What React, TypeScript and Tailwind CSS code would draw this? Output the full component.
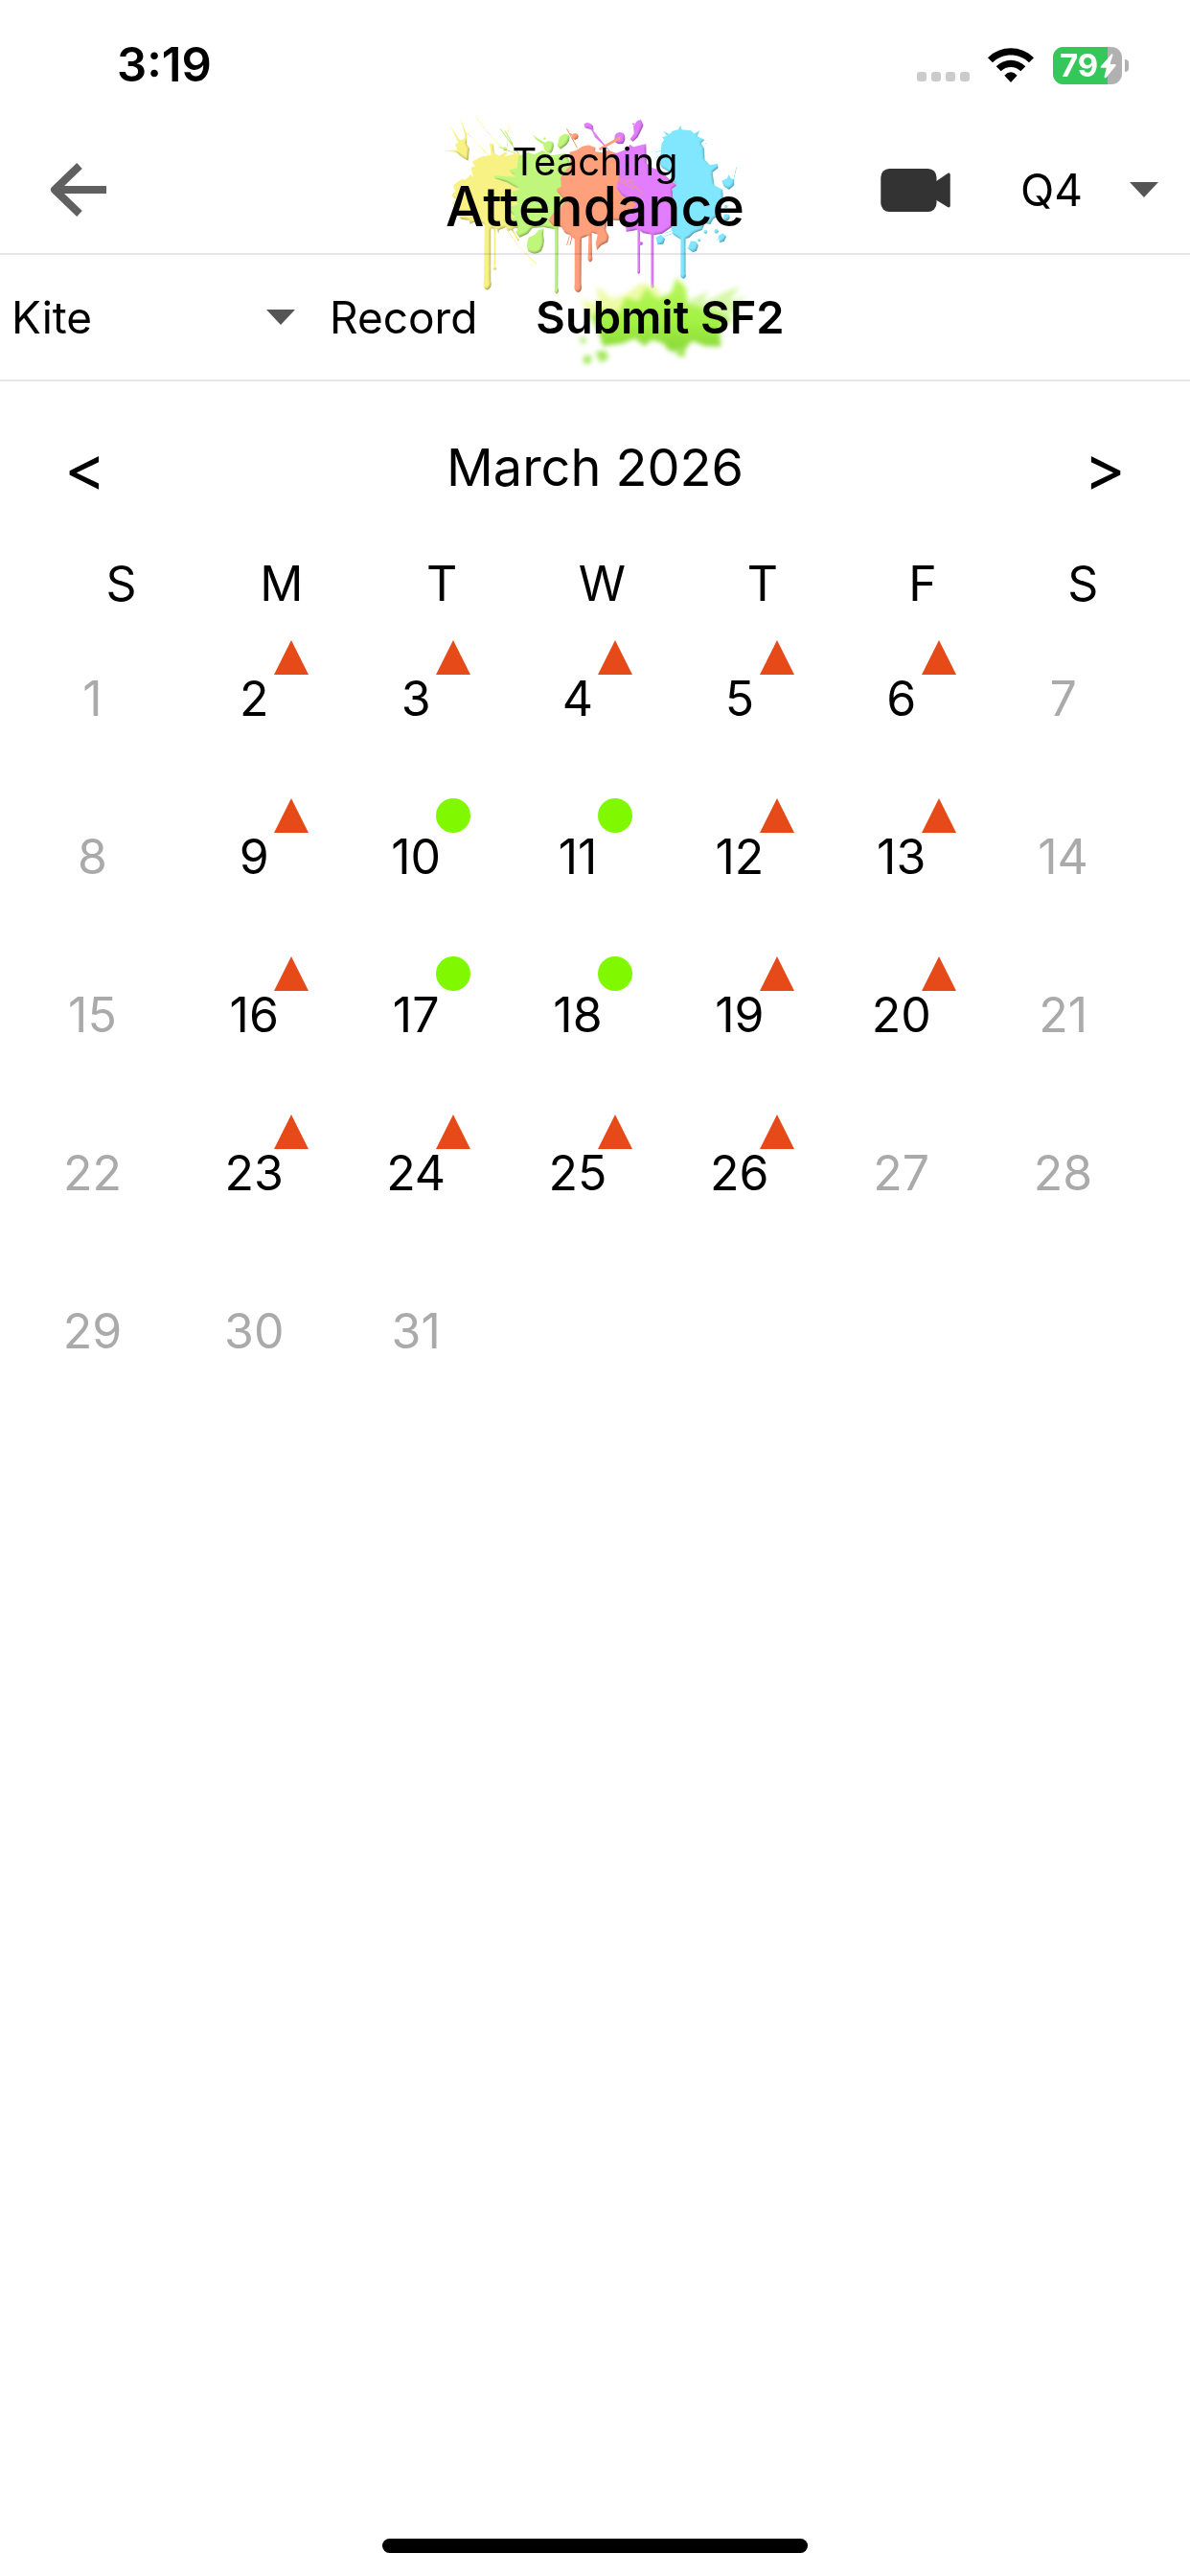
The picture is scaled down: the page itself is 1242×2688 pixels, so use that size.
import { useState } from "react";

type Mark = "absent" | "present";

const WEEKDAYS = ["S", "M", "T", "W", "T", "F", "S"];

const MARKS: Record<number, Mark> = {
  2: "absent", 3: "absent", 4: "absent", 5: "absent", 6: "absent",
  9: "absent", 10: "present", 11: "present", 12: "absent", 13: "absent",
  16: "absent", 17: "present", 18: "present", 19: "absent", 20: "absent",
  23: "absent", 24: "absent", 25: "absent", 26: "absent",
};

const DAYS = Array.from({ length: 31 }, (_, i) => i + 1);

function Caret() {
  return (
    <svg viewBox="0 0 30 16" className="pointer-events-none h-4 w-[30px] shrink-0" aria-hidden="true">
      <path d="M0 0h30L15 16z" fill="#555" />
    </svg>
  );
}

function StatusBar() {
  return (
    <div className="flex h-[132px] items-center justify-between pt-1 pr-16 pl-[122px]">
      <span className="text-[49px] leading-[56px] font-semibold">3:19</span>
      <div className="flex items-center">
        <div className="mt-6 flex gap-[5px]">
          <span className="size-[10px] rounded-[3px] bg-[#cbcbcb]" />
          <span className="size-[10px] rounded-[3px] bg-[#cbcbcb]" />
          <span className="size-[10px] rounded-[3px] bg-[#cbcbcb]" />
          <span className="size-[10px] rounded-[3px] bg-[#cbcbcb]" />
        </div>
        <svg viewBox="0 0 144 108" className="ml-[19px] h-9 w-12" aria-hidden="true">
          <path d="M0 31C40-9 104-9 144 31L129 46C97 15 47 15 15 46Z" />
          <path d="M26 58C52 32 92 32 118 58L103 73C86 56 58 56 41 73Z" />
          <path d="M52 86Q72 66 92 86L72 108Z" />
        </svg>
        <div className="ml-5 flex items-center gap-[3px]">
          <div className="relative flex h-[39px] w-[72px] items-center overflow-hidden rounded-[11px] bg-[#b1b1b1]">
            <div className="absolute inset-y-0 left-0 w-[57px] bg-[#34c759]" />
            <span className="relative pl-[7px] text-[33px] leading-[39px] font-bold text-white">79</span>
            <svg viewBox="0 0 50 78" className="absolute top-[7px] right-[6px] h-[26px] w-[17px]" aria-hidden="true">
              <path d="M36 1 2 40Q0 44 4 44H20L13 72Q14 79 19 75L49 38Q51 33 46 33H31L40 4Q40-1 36 1Z" fill="#fff" />
            </svg>
          </div>
          <span className="h-[13px] w-1 rounded-r-full bg-[#b1b1b1]" />
        </div>
      </div>
    </div>
  );
}

function PaintSplash() {
  return (
    <svg
      viewBox="60 45 960 585"
      className="pointer-events-none absolute top-[-17px] left-1/2 h-[195px] w-[320px] -translate-x-1/2 mix-blend-multiply"
      aria-hidden="true"
    >
      <defs>
        <filter id="paint" x="-5%" y="-5%" width="110%" height="110%" colorInterpolationFilters="sRGB">
          <feGaussianBlur in="SourceAlpha" stdDeviation="4" result="soft" />
          <feDiffuseLighting in="soft" surfaceScale="4" diffuseConstant="1.15" lightingColor="#fff" result="light">
            <feDistantLight azimuth="235" elevation="62" />
          </feDiffuseLighting>
          <feComposite in="SourceGraphic" in2="light" operator="arithmetic" k1="0.7" k2="0.3" k3="0" k4="0" result="lit" />
          <feComposite in="lit" in2="SourceAlpha" operator="in" />
        </filter>
      </defs>
      {/* yellow */}
      <g filter="url(#paint)" fill="#f8f284" stroke="#f8f284" strokeLinecap="round">
        <path strokeWidth="1" d="M102 152 112 146 84 90 117 138Q133 138 133 125L119 72 138 118 139 152 147 165 143 204Q118 190 105 176L68 172 108 169Z" />
        <path strokeWidth="1" d="M155 206 184 190 215 186 210 148 221 150 225 180 240 188 257 176 266 180 256 190 300 178 325 205 330 420 290 414 270 424 262 412 240 420 238 432 232 416 214 416 214 580Q220 600 203 608 186 603 192 580L194 402 160 396 148 402 146 390 120 386 112 374 124 366 100 358 112 350 92 336 104 326 90 310 102 300 96 280 120 262 136 262 150 246 158 254 152 225 164 220Z" />
        <path strokeWidth="3" fill="none" d="M142 118 210 190M167 65 196 105 250 164M272 96 264 130 266 160" />
        <path strokeWidth="3" fill="none" d="M262 416 300 470 355 526" />
        <path strokeWidth="6" fill="none" d="M280 418 300 452M226 410V540" />
        <circle cx="226" cy="541" r="5" />
      </g>
      {/* green */}
      <g filter="url(#paint)" fill="#c0f67c" stroke="#c0f67c" strokeLinecap="round">
        <path strokeWidth="1" d="M300 190 330 176 350 184 376 170 404 186 450 180 470 230 458 410 425 410 424 600Q430 614 420 621 410 614 414 600L414 418 380 412 344 414 330 432 304 444 292 428 300 412 250 390 290 380 262 350 300 340 280 300 305 294 262 270 224 258 224 250 290 254 270 232 296 226Z" />
        <path strokeWidth="1" d="M380 416 378 434Q386 462 372 486 352 502 330 486 322 460 334 442 350 440 364 420Z" />
        <path strokeWidth="1" d="M344 120 356 130 384 146Q394 136 410 146 414 166 402 180 380 180 378 152L354 136ZM428 130Q446 112 460 124 464 142 448 156L432 168 422 156Z" />
        <circle cx="382" cy="134" r="4" />
        <path strokeWidth="4" fill="none" d="M244 104 300 180M258 110 282 150M240 160 290 180" />
        <circle cx="258" cy="166" r="6" />
      </g>
      {/* orange */}
      <g filter="url(#paint)" fill="#ffa07c" stroke="#ffa07c" strokeLinecap="round">
        <path strokeWidth="1" d="M460 176 482 170 500 158 520 154 542 162 540 174 566 178 580 170 610 180 622 240 640 300 640 320 680 330 690 350 660 366 640 390 600 390 580 380 574 420 584 440 580 458 560 468 546 484 542 462 548 434 530 428 531 502Q536 518 525 521 514 516 518 502L520 438 498 446 497 590Q502 612 487 616 472 612 476 590L476 448 460 436 446 430 436 412 410 408 394 390 410 366 430 352 446 330 430 310 420 294 434 284 432 256 450 230 462 220Z" />
        <circle cx="478" cy="127" r="10" />
        <circle cx="430" cy="296" r="9" />
        <path strokeWidth="4" fill="none" d="M452 104 484 162M464 118 478 136M460 440 452 466M468 440 462 466" />
      </g>
      {/* purple */}
      <g filter="url(#paint)" fill="#e27dfd" stroke="#e27dfd" strokeLinecap="round">
        <path strokeWidth="1" d="M596 184 636 168 650 152 660 160 700 150 702 212 720 226 744 232 772 260 798 280 782 292 790 360 782 410 750 432 724 436 724 590Q727 602 720 603 713 602 715 590L715 434 690 430 681 422 681 548Q683 556 677 558 671 556 673 548L673 420 638 426 636 412 650 408 624 392 640 372 670 340 625 312 608 290 616 240Z" />
        <path strokeWidth="1" d="M506 88Q520 78 534 94L536 110 560 140 596 182 540 130 528 106 508 100ZM672 78 684 74 692 92 686 106 674 130 658 144 650 134 662 118 660 94Z" />
        <path strokeWidth="1" d="M602 124Q612 108 630 118 640 134 628 150 608 154 600 140Z" />
        <circle cx="660" cy="88" r="3" />
        <circle cx="684" cy="462" r="6" />
      </g>
      <path d="M556 166 606 138 616 132" stroke="#ffa07c" strokeWidth="8" strokeLinecap="round" fill="none" />
      <path d="M608 256 650 272 688 304M612 264 664 292M640 262 660 266" stroke="#f09a8c" strokeWidth="3" fill="none" />
      {/* blue */}
      <g filter="url(#paint)" fill="#80e7ff" stroke="#80e7ff" strokeLinecap="round">
        <path strokeWidth="1" d="M748 150 756 138 750 128 764 126 754 110 774 120 782 110 800 106 808 92 812 106 840 108 850 118 868 108 860 126 884 138 872 148 882 164 884 200 900 216 924 212 926 226 908 240 914 280 940 294 942 330 930 346 936 370 910 386 902 402 884 400 876 420 850 430 836 444 824 448 824 558Q828 570 816 573 804 568 808 558L808 450 786 436 778 420 790 380 782 292 796 280 780 264 776 240 750 226 736 200 746 180Z" />
        <path strokeWidth="1" d="M936 266 954 258 958 246 966 258 976 262 976 280 960 294 944 284ZM926 438 940 430 952 440 944 456 930 460ZM840 454 856 456 864 468 858 486 846 490 830 478ZM730 444 746 434 760 448 754 464 736 466Z" />
        <circle cx="952" cy="380" r="10" />
        <circle cx="920" cy="424" r="7" />
        <circle cx="886" cy="426" r="6" />
        <circle cx="866" cy="452" r="5" />
        <circle cx="950" cy="346" r="5" />
        <path strokeWidth="3" fill="none" d="M974 262 983 224M936 440 920 452M760 430 776 424M756 440 786 430M884 150 888 148M730 176 748 172M728 196 740 190" />
      </g>
    </svg>
  );
}

function GreenSpray() {
  return (
    <svg
      viewBox="480 540 560 310"
      className="pointer-events-none absolute top-[-23px] left-10 h-[103px] w-[187px]"
      aria-hidden="true"
    >
      <defs>
        <filter id="spray" x="-20%" y="-20%" width="140%" height="140%" colorInterpolationFilters="sRGB">
          <feGaussianBlur stdDeviation="8" />
        </filter>
        <linearGradient id="lime" x1="0" y1="0" x2="0" y2="1">
          <stop offset="0" stopColor="#b9f75c" />
          <stop offset="0.6" stopColor="#a3f244" />
          <stop offset="1" stopColor="#8ad83a" />
        </linearGradient>
      </defs>
      <g filter="url(#spray)">
        <path fill="#ecfb9e" opacity="0.9" d="M500 640 556 650 550 596 600 636 640 622 690 586 740 600 760 640 700 690 530 700Z" />
        <path fill="#c4f384" opacity="0.7" d="M840 640 900 612 884 650 950 616 1000 596 966 644 1020 630 970 690 860 710Z" />
        <path
          fill="url(#lime)"
          d="M530 690 575 670 620 680 640 630 682 644 706 600 740 636 784 616 800 570 830 600 836 650 880 664 930 680 976 700 936 730 940 786 890 784 850 768 820 800 780 800 756 774 724 764 700 784 670 760 630 776 570 784 556 740Z"
        />
        <path fill="#a5e85a" d="M546 802 578 798 588 822 562 836ZM508 816 532 812 532 838 510 840ZM800 786 830 794 826 820 802 814ZM496 756 520 762 506 780Z" />
      </g>
    </svg>
  );
}

function DayCell({ day }: { day: number }) {
  const mark = MARKS[day];
  return (
    <button
      type="button"
      disabled={!mark}
      className="relative flex h-[165px] justify-center pt-[31px] text-[50px] leading-[60px] disabled:text-[#aaa]"
    >
      {day}
      {mark && (
        <svg viewBox="0 0 36 36" className="absolute top-0 left-1/2 ml-[21px] size-9" role="img" aria-label={mark}>
          {mark === "absent" ? <path d="M18 0 36 36H0z" fill="#e64a19" /> : <circle cx="18" cy="18" r="18" fill="#80f800" />}
        </svg>
      )}
    </button>
  );
}

export default function App() {
  const [quarter, setQuarter] = useState("Q4");
  const [section, setSection] = useState("Kite");

  return (
    <div className="flex min-h-screen flex-col bg-white font-[Inter,'Liberation_Sans',sans-serif] text-black">
      <StatusBar />

      <header className="relative grid h-[134px] grid-cols-[1fr_auto_1fr] items-center border-b-2 border-[#e5e5ea]">
        <PaintSplash />
        <div className="flex items-center pl-[51px]">
          <button type="button" aria-label="Back">
            <svg viewBox="0 0 60 56" className="h-14 w-[60px]" fill="none" stroke="#606060" strokeWidth="8" aria-hidden="true">
              <path d="M60 28H6M32 3 6 28 32 53" strokeLinejoin="round" />
            </svg>
          </button>
        </div>
        <h1 className="relative flex flex-col items-center pb-1">
          <span className="text-[40px] leading-10">Teaching</span>
          <span className="text-[57px] leading-[54px] font-medium">Attendance</span>
        </h1>
        <div className="flex items-center justify-end pr-[33px]">
          <button type="button" aria-label="Start video class">
            <svg viewBox="0 0 219 136" className="h-[45px] w-[73px]" fill="#333" aria-hidden="true">
              <rect width="176" height="136" rx="27" />
              <path d="M174 40 212 14Q218 12 219 18V118Q218 124 212 122L174 98Z" />
            </svg>
          </button>
          <label className="ml-[73px] flex items-center">
            <select
              aria-label="Quarter"
              value={quarter}
              onChange={(e) => setQuarter(e.target.value)}
              className="w-[114px] appearance-none bg-transparent text-[46px] leading-[56px]"
            >
              <option>Q1</option>
              <option>Q2</option>
              <option>Q3</option>
              <option>Q4</option>
            </select>
            <Caret />
          </label>
        </div>
      </header>

      <nav className="flex h-[132px] items-center border-b-2 border-[#e5e5ea] pl-3">
        <label className="flex w-[296px] items-center">
          <select
            aria-label="Section"
            value={section}
            onChange={(e) => setSection(e.target.value)}
            className="min-w-0 flex-1 appearance-none bg-transparent text-[46px] leading-[56px]"
          >
            <option>Kite</option>
          </select>
          <Caret />
        </label>
        <button type="button" className="ml-9 text-[46px] leading-[56px]">Record</button>
        <button type="button" className="relative ml-[61px] text-[47px] leading-[56px] font-semibold">
          <GreenSpray />
          <span className="relative">Submit SF2</span>
        </button>
      </nav>

      <main className="flex-1">
        <div className="flex items-center justify-between px-[67px] pt-[52px]">
          <button type="button" aria-label="Previous month" className="text-[66px] leading-[76px]">
            &lt;
          </button>
          <h2 className="text-[54px] leading-[76px]">March 2026</h2>
          <button type="button" aria-label="Next month" className="text-[66px] leading-[76px]">
            &gt;
          </button>
        </div>

        <div className="mt-[53px] grid grid-cols-7 pr-7 pl-[43px] text-center text-[50px] leading-[60px]">
          {WEEKDAYS.map((name, i) => (
            <span key={i}>{name}</span>
          ))}
        </div>

        <div className="mt-[29px] grid grid-cols-7 pr-12 pl-3">
          {DAYS.map((day) => (
            <DayCell key={day} day={day} />
          ))}
        </div>
      </main>

      <div className="mb-6 h-[15px] w-[444px] self-center rounded-full bg-black" />
    </div>
  );
}
